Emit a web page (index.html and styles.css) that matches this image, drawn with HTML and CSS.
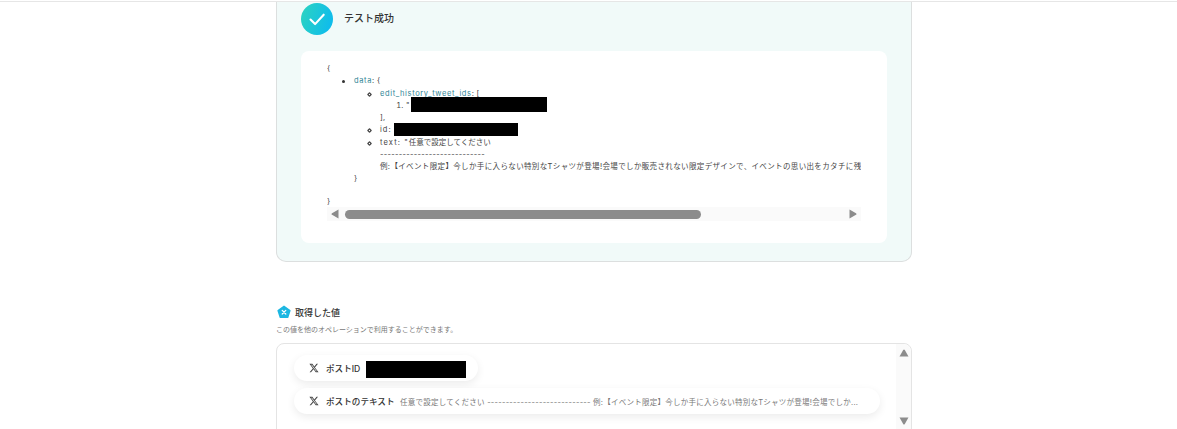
FILE: index.html
```html
<!DOCTYPE html>
<html lang="ja">
<head>
<meta charset="utf-8">
<title>テスト成功</title>
<link rel="stylesheet" href="styles.css">
</head>
<body>
<div class="topline"></div>
<main class="column">
  <section class="result-card">
    <header class="result-head">
      <span class="check-badge">
        <svg viewBox="0 0 32 32" width="32" height="32"><defs><linearGradient id="g" x1="0" y1="0" x2="1" y2="0.3"><stop offset="0" stop-color="#2dd4bf"/><stop offset="1" stop-color="#10bdea"/></linearGradient></defs><circle cx="16" cy="16" r="16" fill="url(#g)"/><path d="M9.500 16.500l4.600 4.600 8.600-9.400" fill="none" stroke="#fff" stroke-width="2.100" stroke-linecap="round" stroke-linejoin="round"/></svg>
      </span>
      <h2 class="result-title">テスト成功</h2>
    </header>
    <div class="json-panel">
      <div class="json-view">
        <div class="line">{</div>
        <ul class="level1">
          <li><span class="line"><span class="key">data</span>: {</span>
            <ul class="level2">
              <li><span class="line"><span class="key">edit_history_tweet_ids</span>: [</span>
                <ol class="level3">
                  <li><span class="line redact-line">"<span class="redact redact-a"></span></span></li>
                </ol>
                <span class="line">],</span>
              </li>
              <li><span class="line"><span class="id-key">id:</span> <span class="redact redact-b"></span></span></li>
              <li><span class="line"><span class="text-key">text: "</span><span class="tight">任意で設定してください</span></span>
                <span class="line">----------------------------</span>
                <span class="line example-line">例:【イベント限定】今しか手に入らない特別なTシャツが登場!会場でしか販売されない限定デザインで、イベントの思い出をカタチに残</span>
              </li>
            </ul>
            <span class="line">}</span>
          </li>
        </ul>
        <div class="line closing">}</div>
      </div>
      <div class="h-scroll">
        <svg class="arrow" viewBox="0 0 8 10" width="8" height="10"><path d="M7.500.5v9L1 5.800a1 1 0 0 1 0-1.600z" fill="#8c8c8c"/></svg>
        <div class="h-thumb"></div>
        <div class="h-spacer"></div>
        <svg class="arrow" viewBox="0 0 8 10" width="8" height="10"><path d="M.5.5v9L7 5.800a1 1 0 0 0 0-1.600z" fill="#8c8c8c"/></svg>
      </div>
    </div>
  </section>

  <section class="values">
    <div class="values-head">
      <svg viewBox="0 0 14 14" width="14" height="14"><path d="M7 .5l6.300 4.400a.8.8 0 0 1 .3.9l-2.200 6.800a.8.8 0 0 1-.8.5H3.400a.8.8 0 0 1-.8-.5L.4 5.800a.8.8 0 0 1 .3-.9z" fill="#1cb7e2"/><path d="M5.200 5.400l3.600 3.600M8.800 5.400l-3.600 3.600" stroke="#fff" stroke-width="1.200" stroke-linecap="round"/></svg>
      <h3 class="values-title">取得した値</h3>
    </div>
    <p class="values-note">この値を他のオペレーションで利用することができます。</p>
    <div class="values-box">
      <div class="pills">
        <div class="pill pill-short">
          <svg class="x-icon" viewBox="0 0 24 24" width="10" height="10"><path d="M18.200 2h3.400l-7.400 8.500L23 22h-6.800l-5.300-7-6.100 7H1.400l7.900-9.100L1 2h7l4.800 6.400zM17 20h1.900L7 3.900H5z" fill="#444"/></svg>
          <span class="pill-label">ポストID</span>
          <span class="redact redact-c"></span>
        </div>
        <div class="pill pill-long">
          <svg class="x-icon" viewBox="0 0 24 24" width="10" height="10"><path d="M18.200 2h3.400l-7.400 8.500L23 22h-6.800l-5.300-7-6.100 7H1.400l7.900-9.100L1 2h7l4.800 6.400zM17 20h1.900L7 3.900H5z" fill="#444"/></svg>
          <span class="pill-label">ポストのテキスト</span>
          <span class="pill-value">任意で設定してください ---------------------------- 例:【イベント限定】今しか手に入らない特別なTシャツが登場!会場でしか...</span>
        </div>
      </div>
      <div class="v-scroll">
        <svg viewBox="0 0 10 8" width="10" height="8"><path d="M4.200 1a1 1 0 0 1 1.600 0L9.500 7.500H.5z" fill="#8c8c8c"/></svg>
        <svg viewBox="0 0 10 8" width="10" height="8"><path d="M4.200 7a1 1 0 0 0 1.600 0L9.500.5H.5z" fill="#8c8c8c"/></svg>
      </div>
    </div>
  </section>
</main>
</body>
</html>
```
FILE: styles.css
```css
* { box-sizing: border-box; }
html, body { margin: 0; height: 429px; overflow: hidden; background: #fff; }
body { font-family: Inter, "Noto Sans CJK JP", "Noto Sans", sans-serif; color: #444; }

.topline { height: 2px; border-bottom: 1px solid #e6e6e6; background: #fff; }

.column { width: 636px; margin-left: 276px; }

.result-card {
  height: 260px;
  padding: 1px 24px 0;
  background: #f1faf9;
  border: 1px solid #dcdfdf;
  border-top: 0;
  border-radius: 0 0 10px 10px;
}
.result-head { display: flex; align-items: center; gap: 11px; height: 32px; }
.check-badge { display: block; width: 32px; height: 32px; }
.result-title { margin: 0 0 3px; font-size: 10px; font-weight: 500; color: #333; }

.json-panel {
  margin-top: 16px;
  width: 586px;
  height: 192px;
  padding: 12px 26px 0;
  background: #fff;
  border-radius: 8px;
}
.json-view {
  height: 144px;
  overflow: hidden;
  font-size: 7.5px;
  line-height: 12.25px;
  letter-spacing: 0.3px;
  color: #444;
  white-space: nowrap;
}
.line { display: block; }
.key { color: #2f8596; letter-spacing: 0.63px; }
.id-key { letter-spacing: 1px; }
.text-key { letter-spacing: 1.1px; }
.tight { letter-spacing: 0; }
.example-line { letter-spacing: 0.36px; }
.json-view ul, .json-view ol { margin: 0; padding: 0; }
.level1 { padding-left: 27px !important; list-style: none; }
.level2 { padding-left: 26px !important; list-style: none; }
.level3 { padding-left: 26px !important; }
.level1 > li, .level2 > li { position: relative; }
.level1 > li::before {
  content: "";
  position: absolute;
  left: -12.5px;
  top: 4.5px;
  width: 3.5px;
  height: 3.5px;
  border-radius: 50%;
  background: #333;
}
.level2 > li::before {
  content: "";
  position: absolute;
  left: -13px;
  top: 4px;
  width: 5px;
  height: 5px;
  background: radial-gradient(circle, #fff 0, #fff 0.6px, #555 1px, #555 1.9px, transparent 2.3px);
}
.closing { margin-top: 10.75px; }
.redact { display: inline-block; background: #000; vertical-align: middle; }
.redact-line { height: 12.25px; }
.redact-a { width: 136px; height: 15px; margin-left: 1px; margin-top: -3px; }
.redact-b { width: 124px; height: 13px; margin-top: -2px; }
.redact-c { width: 100px; height: 17px; margin-left: 6px; margin-top: 2px; }

.h-scroll {
  display: flex;
  align-items: center;
  height: 14px;
  width: 534px;
  padding: 0 4px;
  background: #fafafa;
}
.arrow { flex: none; }
.h-thumb { flex: none; width: 356px; height: 9px; margin-left: 6px; border-radius: 5px; background: #8c8c8c; }
.h-spacer { flex: 1; }

.values { margin-top: 43px; }
.values-head { display: flex; align-items: center; gap: 4px; height: 14px; padding-left: 1px; }
.values-title { margin: 0; font-size: 9px; font-weight: 500; color: #333; }
.values-note { margin: 5px 0 0; font-size: 7px; line-height: 12px; color: #777; }
.values-box {
  display: flex;
  justify-content: space-between;
  height: 120px;
  margin-top: 7px;
  border: 1px solid #e4e4e4;
  border-radius: 8px;
}
.pills { display: flex; flex-direction: column; align-items: flex-start; gap: 7px; padding: 11px 0 0 17px; }
.pill {
  display: flex;
  align-items: center;
  height: 26px;
  padding-left: 15px;
  border-radius: 13px;
  background: #fff;
  box-shadow: 0 3px 8px rgba(0, 0, 0, 0.08);
  white-space: nowrap;
}
.pill-short { width: 184px; }
.pill-long { width: 586px; }
.x-icon { flex: none; margin-right: 7px; }
.pill-label { font-size: 8.6px; font-weight: 500; color: #333; }
.pill-value { margin-left: 5.5px; font-size: 7.5px; letter-spacing: 0.25px; color: #777; }
.v-scroll {
  display: flex;
  flex-direction: column;
  align-items: center;
  gap: 60px;
  width: 15px;
  padding-top: 5px;
  background: #fafafa;
  border-radius: 0 8px 0 0;
}
```
